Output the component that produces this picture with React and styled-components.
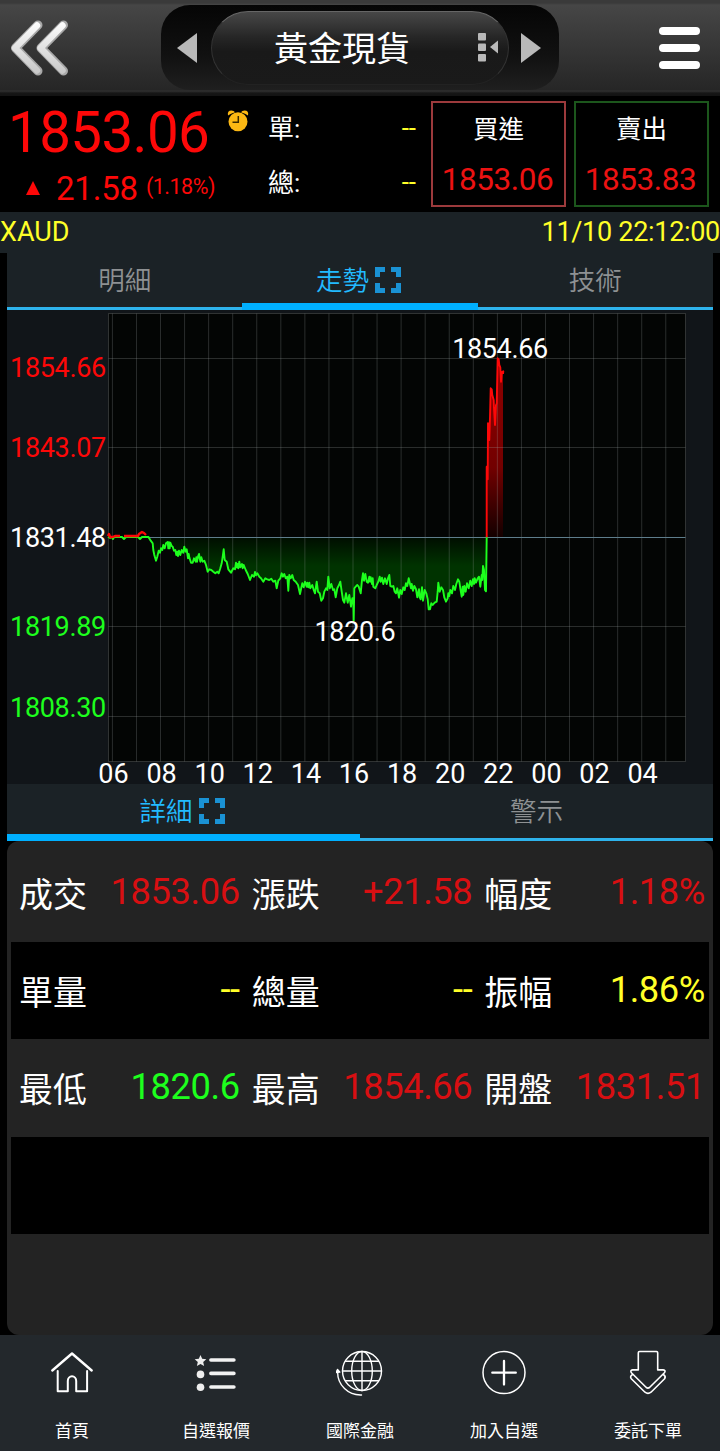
import styled, { createGlobalStyle } from 'styled-components';

const GlobalStyle = createGlobalStyle`
  * {
    box-sizing: border-box;
  }
  body {
    margin: 0;
    background: #000;
    color: #fff;
    font-family: Roboto, "Noto Sans CJK TC", sans-serif;
  }
`;

const RED = '#fd0808';
const DARK_RED = '#d80f12';
const GREEN = '#1dff1d';
const YELLOW = '#ffff28';
const BLUE = '#22bbff';

const Screen = styled.div`
  width: 720px;
  height: 1451px;
  display: flex;
  flex-direction: column;
  overflow: hidden;
`;

// ---- header ----

const Header = styled.header`
  display: flex;
  height: 96px;
  padding: 5px 20px 0 10px;
  background: linear-gradient(#3a3a3a 0, #3a3a3a 3px, #464646 5px, #262626 90px, #303030 91px, #161616 93px, #121212 96px);
`;

const BackIcon = styled.svg`
  width: 60px;
  height: 60px;
  margin-top: 13px;
`;

const Switcher = styled.div`
  display: flex;
  align-items: center;
  width: 398px;
  height: 85px;
  margin: 0 100px 0 91px;
  padding-left: 16px;
  border-radius: 29px;
  background: linear-gradient(#050505, #111 60%, #1f1f1f);
`;

const Arrow = styled.div`
  width: 0;
  height: 0;
  border: 15.5px solid transparent;
  border-left: ${props => props.next ? '20px solid #b9b9b9' : '0'};
  border-right: ${props => props.next ? '0' : '20px solid #b9b9b9'};
`;

const Product = styled.div`
  display: flex;
  align-items: center;
  justify-content: flex-end;
  width: 298px;
  height: 74px;
  margin: 0 12px 0 14px;
  padding-right: 8px;
  border: 1px solid #333;
  border-top-color: #666;
  border-bottom-color: #222;
  border-radius: 37px;
  background: linear-gradient(#474747, #262626 35%, #191919 55%, #1a1a1a);
  font-size: 34px;
  line-height: 72px;
`;

const ProductName = styled.span`
  margin-right: 68px;
  padding-top: 2px;
`;

const ListIcon = styled.svg`
  width: 22px;
  height: 30px;
`;

const MenuButton = styled.div`
  display: flex;
  flex-direction: column;
  gap: 9px;
  margin-top: 22px;
`;

const MenuBar = styled.span`
  width: 41px;
  height: 8px;
  border-radius: 4px;
  background: #fff;
`;

// ---- quote ----

const Quote = styled.section`
  display: flex;
  height: 116px;
`;

const Last = styled.div`
  width: 268px;
  color: ${RED};
`;

const LastRow = styled.div`
  display: flex;
  height: 73px;
  padding-left: 8px;
  font-size: 56.5px;
  letter-spacing: -0.6px;
  line-height: 74px;
`;

const AlarmIcon = styled.svg`
  width: 22px;
  height: 24px;
  margin: 12px 0 0 18px;
`;

const ChangeRow = styled.div`
  display: flex;
  align-items: baseline;
  padding-left: 26px;
  font-size: 33px;
  letter-spacing: -0.2px;
  line-height: 39px;
`;

const UpMark = styled.span`
  border: 7.5px solid transparent;
  border-top: 0;
  border-bottom: 14px solid ${RED};
  margin-right: 16px;
  transform: translateY(-5px);
`;

const Percent = styled.span`
  margin-left: 8px;
  font-size: 21.5px;
  letter-spacing: -0.5px;
  transform: translateY(-6px);
`;

const Volumes = styled.div`
  width: 163px;
  padding: 6px 15px 0 0;
`;

const Volume = styled.div`
  display: flex;
  justify-content: space-between;
  height: 54px;
  font-size: 26px;
  line-height: 54px;
`;

const VolumeValue = styled.span`
  color: ${YELLOW};
  line-height: 52px;
`;

const Deal = styled.div`
  width: 135px;
  height: 106px;
  margin: 5px 8px 0 0;
  border: 2px solid ${props => props.sell ? '#1c561c' : '#9c3a3c'};
  text-align: center;
  font-size: 25.5px;
  line-height: 52px;
`;

const DealPrice = styled.div`
  padding-right: 2px;
  color: #ec1212;
  font-size: 31.5px;
  letter-spacing: -0.4px;
  line-height: 50px;
`;

const SymbolBar = styled.div`
  display: flex;
  justify-content: space-between;
  height: 41px;
  background: #1b2226;
  color: ${YELLOW};
  font-size: 27px;
  line-height: 41px;
`;

const Time = styled.span`
  letter-spacing: -0.3px;
`;

// ---- tabs ----

const Tabs = styled.nav`
  display: grid;
  grid-auto-flow: column;
  grid-auto-columns: 1fr;
  height: 57px;
  margin: 0 7px;
  background: #1b2226;
`;

const Tab = styled.div`
  display: flex;
  justify-content: center;
  padding-right: ${props => props.active ? '3px' : '0'};
  color: ${props => props.active ? BLUE : '#8e9193'};
  font-size: 26.5px;
  font-weight: 350;
  line-height: 56px;
  box-shadow: inset 0 ${props => props.active ? '-7px #00b0ff' : '-3px #2eb3ec'};
`;

const ExpandIcon = styled.svg`
  width: 26px;
  height: 26px;
  margin: 14px 0 0 6px;
`;

const Expand = () => (
  <ExpandIcon viewBox="0 0 26 26" fill="none" stroke="#1a92d4" strokeWidth="5">
    <path d="M2.5 10V2.5H10M16 2.5H23.5V10M23.5 16V23.5H16M10 23.5H2.5V16" />
  </ExpandIcon>
);

// ---- chart ----

const ChartArea = styled.svg`
  display: block;
  flex: none;
  width: 706px;
  height: 474px;
  margin: 0 7px;
  overflow: visible;
  background: #111519;
  font-size: 27px;
`;

const PLOT = { left: 101.5, top: 3.5, right: 678.5, bottom: 451.5 };
const BASE = 227.5;
const COLUMNS = Array.from({ length: 24 }, (_, i) => 105.4 + i * 24.06);
const LEVELS = [48.5, 137.5, 316.5, 406.5];

const PRICES = [
  { text: '1854.66', y: 67, color: RED },
  { text: '1843.07', y: 147, color: RED },
  { text: '1831.48', y: 237, color: '#fff' },
  { text: '1819.89', y: 326, color: GREEN },
  { text: '1808.30', y: 407, color: GREEN },
];
const HOURS = ['06', '08', '10', '12', '14', '16', '18', '20', '22', '00', '02', '04'];

// ticks are stored in thirds of a pixel from each part's origin
const morning = '145,80 152,92 158,100 160,120 163,135 168,152 172,140 176,122 180,128 183,115 187,120 190,105 194,115 198,100 203,96 205,115 207,97 209,115 211,98 215,108 218,110 222,122 226,120 229,135 232,125 234,138 237,122 241,135 245,120 250,128 253,110 257,125 260,118 264,145 266,132 268,142 273,158 278,158 282,145 287,155 289,142 291,155 294,140 297,132 301,155 304,142 308,155 313,152 318,165 323,185 328,178 334,180 340,185 346,190 352,185 356,190 361,175 365,160 368,140 371,118 374,150 380,155 385,178 393,188 400,175 405,178 408,158 410,172 413,162 415,175 418,155 421,172 426,162 428,175 431,165 437,180 443,192 450,210 456,195 462,200 465,186 468,196 472,190 478,200 483,205 490,215 496,205 502,208 508,210 514,206 520,215 526,212 530,235 535,212 541,205 545,190 549,200 553,192 557,205 562,200 565,242 568,195 572,205 577,195 581,210 587,215 594,225 600,252 607,220 611,232 615,215 620,230 622,218 625,232 628,218 631,235 637,225 641,240 645,250 650,215 654,245 659,250 664,272 669,265 673,245 678,235 682,240 685,200 689,235 694,222 699,240 703,238 707,262 712,235 717,225 721,215 725,245 729,270 733,278 738,250 743,278 748,255 753,290 757,265 760,265 761,332';
const evening = '41,332 43,235 47,230 52,225 56,230 62,250 66,210 69,190 72,212 76,192 80,215 84,218 88,200 90,215 92,202 96,222 98,205 100,230 106,235 110,225 115,215 119,200 122,215 126,203 130,222 135,205 140,222 144,205 148,195 151,228 156,230 160,228 164,245 168,250 172,235 177,263 181,240 185,252 190,232 194,240 198,220 202,228 206,205 210,222 213,235 215,222 219,242 223,228 228,238 232,262 237,238 239,262 242,268 246,232 249,272 254,240 259,250 263,268 266,298 270,298 274,280 278,285 284,278 290,275 293,245 295,218 299,245 304,232 309,240 313,262 318,275 323,265 325,250 328,258 331,240 336,250 340,228 345,240 349,222 354,208 358,215 361,235 365,260 368,230 370,255 373,228 377,245 381,220 386,235 391,212 395,228 399,208 402,222 404,205 408,218 413,205 417,200 421,230 425,195 427,210 429,168 432,180 435,240 438,244 440,80';
const surge = '380,862 380,650 383,688 384,520 387,522 388,570 390,500 392,415 395,418 397,435 401,450 402,475 405,525 408,465 410,460 413,325 416,328 418,345 421,352 423,395 425,366 430,364 429,372';

const trace = (part, x0, y0) => part
  .split(' ')
  .map(tick => tick.split(','))
  .map(([x, y]) => `${(x0 + x / 3).toFixed(1)},${(y0 + y / 3).toFixed(1)}`)
  .join(' ');

const fall = `${trace(morning, 93, 200)} ${trace(evening, 333, 200)}`;
const rise = trace(surge, 353, -60);

const Chart = () => (
  <ChartArea viewBox="0 0 706 474">
    <defs>
      <linearGradient id="down" gradientUnits="userSpaceOnUse" x1="0" y1="229" x2="0" y2="256">
        <stop offset="0" stopColor="#001000" />
        <stop offset="1" stopColor="#003300" />
      </linearGradient>
      <linearGradient id="up" gradientUnits="userSpaceOnUse" x1="0" y1="55" x2="0" y2="226">
        <stop offset="0" stopColor="#900000" />
        <stop offset="0.6" stopColor="#720000" />
        <stop offset="1" stopColor="#150000" />
      </linearGradient>
    </defs>
    <rect x={PLOT.left} y={PLOT.top} width={577} height={448} fill="#030504" stroke="#303333" />
    <polygon points={`140,228 ${fall}`} fill="url(#down)" />
    <polygon points={`${rise} 496,228`} fill="url(#up)" />
    <g stroke="#9aa3a3" strokeOpacity="0.26">
      {COLUMNS.map(x => <line key={x} x1={x} x2={x} y1={PLOT.top} y2={PLOT.bottom} />)}
      {LEVELS.map(y => <line key={y} x1={PLOT.left} x2={PLOT.right} y1={y} y2={y} />)}
    </g>
    <line x1={PLOT.left} x2={PLOT.right} y1={BASE} y2={BASE} stroke="#5e7d8c" />
    <g fill="none" strokeWidth="1.9" strokeLinejoin="round">
      <path d="M101 227l2 1 2 -1 1 2 1 -2h8l2 2 2 -2h12l2 2 2 -2h5l2 0" stroke={GREEN} />
      <path d="M101 226l1 -2 1 3 3 0 2 -1h5m4 0h14l1 -2 3 -2 2 1 2 2" stroke={RED} strokeWidth="2.4" />
      <polyline points={fall} stroke={GREEN} />
      <polyline points={rise} stroke={RED} />
    </g>
    <g letterSpacing="-0.35">
      {PRICES.map(({ text, y, color }) => (
        <text key={text} x="98.8" y={y} fill={color} textAnchor="end">{text}</text>
      ))}
      <text x="493" y="48" fill="#fff" textAnchor="middle">1854.66</text>
      <text x="348" y="331" fill="#fff" textAnchor="middle">1820.6</text>
    </g>
    {HOURS.map((hour, i) => (
      <text key={hour} x={106.5 + i * 48.1} y="473" fill="#fff" textAnchor="middle">{hour}</text>
    ))}
  </ChartArea>
);

// ---- details ----

const Details = styled.section`
  height: 494px;
  margin: 0 7px;
  padding: 3px 4px;
  border-radius: 12px;
  background: #232323;
`;

const Row = styled.div`
  display: grid;
  grid-template-columns: repeat(3, 1fr);
  height: 97.5px;
  background: ${props => props.dark ? '#000' : '#232323'};
`;

const Cell = styled.div`
  display: flex;
  justify-content: space-between;
  padding: 0 4px 0 8px;
  color: ${props => props.color};
  font-size: 36.3px;
  letter-spacing: -0.4px;
  line-height: 95px;
`;

const CellLabel = styled.span`
  color: #fff;
  font-size: 34px;
  letter-spacing: 0;
  line-height: 102px;
`;

const ROWS = [
  [['成交', '1853.06', DARK_RED], ['漲跌', '+21.58', DARK_RED], ['幅度', '1.18%', DARK_RED]],
  [['單量', '--', YELLOW], ['總量', '--', YELLOW], ['振幅', '1.86%', YELLOW]],
  [['最低', '1820.6', GREEN], ['最高', '1854.66', DARK_RED], ['開盤', '1831.51', DARK_RED]],
  [],
];

// ---- bottom bar ----

const BottomBar = styled.footer`
  display: flex;
  height: 116px;
  background: #23282c;
`;

const NavItem = styled.div`
  flex: 1;
  display: flex;
  flex-direction: column;
  align-items: center;
  padding-top: 14px;
  font-size: 17px;
  line-height: 24px;

  svg {
    width: 48px;
    height: 48px;
    margin-bottom: 22px;
    fill: none;
    stroke: #fff;
    stroke-linecap: round;
    stroke-linejoin: round;
  }
`;

const NAV = [
  {
    label: '首頁',
    icon: (
      <svg viewBox="0 0 48 48" strokeWidth="2">
        <path d="M4.3 21.5L24 4.5l19.7 17" strokeWidth="2.4" />
        <path d="M9.7 22v20.3h10.1V32a4.2 4.8 0 0 1 8.4 0v10.3h10.9V22" />
      </svg>
    ),
  },
  {
    label: '自選報價',
    icon: (
      <svg viewBox="0 0 48 48" strokeWidth="3.6">
        <path d="M8.5 6l1.7 3.8 4.1.4-3.1 2.8.9 4.1-3.6-2.1-3.6 2.1.9-4.1-3.1-2.8 4.1-.4z" fill="#eee" stroke="none" />
        <circle cx="8.5" cy="25.4" r="3.8" fill="#eee" stroke="none" />
        <circle cx="8.5" cy="38.3" r="3.8" fill="#eee" stroke="none" />
        <path d="M18.9 11h23M18.9 24.4h23M18.9 38h23" stroke="#f2f2f2" />
      </svg>
    ),
  },
  {
    label: '國際金融',
    icon: (
      <svg viewBox="0 0 48 48" strokeWidth="1.4">
        <circle cx="26" cy="22" r="19.5" />
        <ellipse cx="26" cy="22" rx="10.3" ry="19.5" />
        <path d="M26 2.5v39M6.5 22h39M9.5 12.3h33M9.5 31.7h33" />
        <path d="M1.6 23C1.6 36 12 46.5 25.5 46" />
        <path d="M0 23.5l1.5-3 2.4 2.6z" fill="#fff" />
      </svg>
    ),
  },
  {
    label: '加入自選',
    icon: (
      <svg viewBox="0 0 48 48" strokeWidth="1.5">
        <circle cx="24" cy="23.6" r="21" />
        <path d="M24 12v23.5M12.3 23.7h23.5" strokeWidth="2.3" />
      </svg>
    ),
  },
  {
    label: '委託下單',
    icon: (
      <svg viewBox="0 0 48 48" strokeWidth="1.6">
        <path d="M15.5 2.5h17q1.2 0 1.2 1.2v17.2h5.5q3 .3 1.2 2.9L25.5 38.5q-1.6 1.2-3.2 0L7.4 23.8q-1.6-2.6 1.2-2.9h5.7V3.7q0-1.2 1.2-1.2z" />
        <path d="M8.5 25.5q-3 1.8-1.2 4.3L21 43.2q3 2.4 6 0L40.6 29.8q1.6-2.5-1.2-4.3" />
      </svg>
    ),
  },
];

export default () => (
  <>
    <GlobalStyle />
    <Screen>
      <Header>
        <BackIcon viewBox="0 0 60 60" fill="none" strokeLinecap="round" strokeLinejoin="round">
          <defs>
            <linearGradient id="steel" gradientUnits="userSpaceOnUse" x1="0" y1="3" x2="0" y2="57">
              <stop offset="0" stopColor="#fff" />
              <stop offset="1" stopColor="#c6c6c6" />
            </linearGradient>
          </defs>
          <path d="M28 7L5.5 30L28 53M53.5 7L31 30L53.5 53" stroke="#a8a8a8" strokeWidth="9" />
          <path d="M27 7.5L5 30l22 22.5M52.5 7.5L30.5 30l22 22.5" stroke="url(#steel)" strokeWidth="6.5" />
        </BackIcon>
        <Switcher>
          <Arrow />
          <Product>
            <ProductName>黃金現貨</ProductName>
            <ListIcon viewBox="0 0 22 30" fill="#b9b9b9">
              <rect x="0" y="0" width="8" height="7.5" rx="1" />
              <rect x="0" y="10.5" width="8" height="7.5" rx="1" />
              <rect x="0" y="21" width="8" height="7.5" rx="1" />
              <path d="M12 14l8-6.5v13z" />
            </ListIcon>
          </Product>
          <Arrow next="true" />
        </Switcher>
        <MenuButton>
          <MenuBar />
          <MenuBar />
          <MenuBar />
        </MenuButton>
      </Header>
      <Quote>
        <Last>
          <LastRow>
            1853.06
            <AlarmIcon viewBox="0 0 22 24">
              <g fill="#fcb813">
                <circle cx="11" cy="13.7" r="9.5" />
                <path d="M1 7.5Q0 2.5 4.5 2.5 7 2.5 8 4.2 3.5 5.5 1 7.5zM21 7.5q1-5-3.5-5-2.5 0-3.5 1.7Q18.5 5.5 21 7.5z" />
              </g>
              <path d="M11.3 8v6.2H5.5" fill="none" stroke="#3a2a00" strokeWidth="1.5" />
            </AlarmIcon>
          </LastRow>
          <ChangeRow>
            <UpMark />
            21.58
            <Percent>(1.18%)</Percent>
          </ChangeRow>
        </Last>
        <Volumes>
          <Volume>單:<VolumeValue>--</VolumeValue></Volume>
          <Volume>總:<VolumeValue>--</VolumeValue></Volume>
        </Volumes>
        <Deal>
          買進
          <DealPrice>1853.06</DealPrice>
        </Deal>
        <Deal sell="true">
          賣出
          <DealPrice>1853.83</DealPrice>
        </Deal>
      </Quote>
      <SymbolBar>
        <span>XAUD</span>
        <Time>11/10 22:12:00</Time>
      </SymbolBar>
      <Tabs>
        <Tab>明細</Tab>
        <Tab active="true">走勢<Expand /></Tab>
        <Tab>技術</Tab>
      </Tabs>
      <Chart />
      <Tabs>
        <Tab active="true">詳細<Expand /></Tab>
        <Tab>警示</Tab>
      </Tabs>
      <Details>
        {ROWS.map((cells, i) => (
          <Row key={i} dark={i % 2 ? 'true' : undefined}>
            {cells.map(([label, value, color]) => (
              <Cell key={label} color={color}>
                <CellLabel>{label}</CellLabel>
                {value}
              </Cell>
            ))}
          </Row>
        ))}
      </Details>
      <BottomBar>
        {NAV.map(({ label, icon }) => (
          <NavItem key={label}>
            {icon}
            {label}
          </NavItem>
        ))}
      </BottomBar>
    </Screen>
  </>
);
